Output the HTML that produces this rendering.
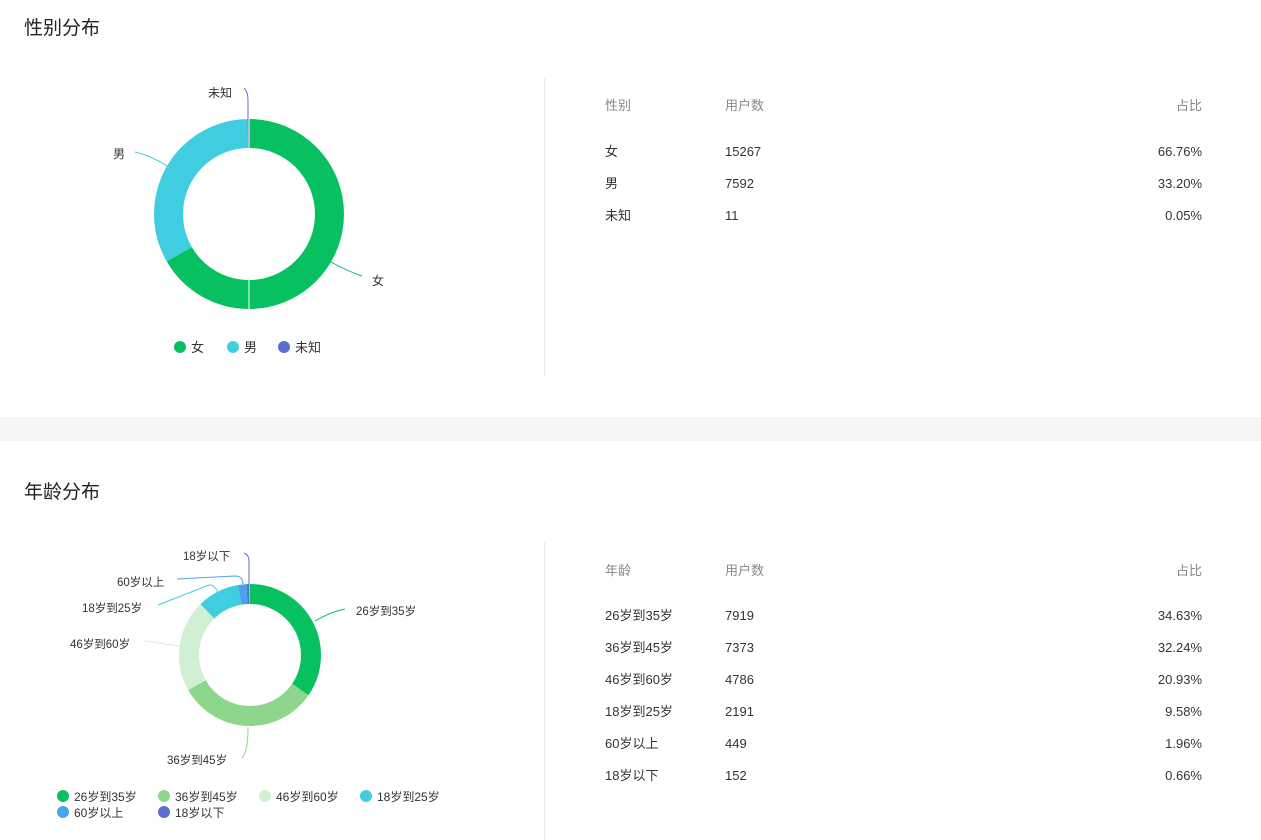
<!DOCTYPE html>
<html><head><meta charset="utf-8"><style>
body{margin:0;width:1261px;height:840px;overflow:hidden;background:#fff;font-family:"Liberation Sans","Noto Sans CJK SC",sans-serif;}
svg{display:block}
</style></head><body>
<svg width="1261" height="840" xmlns="http://www.w3.org/2000/svg" font-family="Liberation Sans, Noto Sans CJK SC, sans-serif">
<rect x="0" y="417" width="1261" height="24" fill="#f5f6f8"/>
<text x="24" y="34" font-size="19" fill="#222">性别分布</text>
<text x="24" y="498" font-size="19" fill="#222">年龄分布</text>
<line x1="544.5" y1="78" x2="544.5" y2="377" stroke="#e8e8e8"/>
<line x1="544.5" y1="542" x2="544.5" y2="840" stroke="#e8e8e8"/>

<!-- gender donut -->
<g transform="translate(249,214) rotate(-90)" fill="none" stroke-width="29">
<circle r="80.5" pathLength="100" stroke="#07c160" stroke-dasharray="66.76 100"/>
<circle r="80.5" pathLength="100" stroke="#40cde0" stroke-dasharray="33.2 100" stroke-dashoffset="-66.76"/>
<circle r="80.5" pathLength="100" stroke="#5b6fd0" stroke-dasharray="0.2 100" stroke-dashoffset="-99.9"/>
</g>
<line x1="249" y1="119" x2="249" y2="309" stroke="#fff" stroke-width="1"/>
<path d="M331,262 Q345,270 362,276" stroke="#07c160" fill="none"/>
<text x="372" y="285" font-size="12" fill="#333">女</text>
<path d="M167,166 Q152,156 135,152" stroke="#40cde0" fill="none"/>
<text x="113" y="158" font-size="12" fill="#333">男</text>
<path d="M248,119 L248,100 Q248,92 244,88" stroke="#5b6fd0" fill="none"/>
<text x="208" y="97" font-size="12" fill="#333">未知</text>
<circle cx="180" cy="347" r="6" fill="#07c160"/><text x="191" y="352" font-size="13" fill="#333">女</text>
<circle cx="233" cy="347" r="6" fill="#40cde0"/><text x="244" y="352" font-size="13" fill="#333">男</text>
<circle cx="284" cy="347" r="6" fill="#5b6fd0"/><text x="295" y="352" font-size="13" fill="#333">未知</text>

<g font-size="13" fill="#333">
<text x="605" y="110" fill="#888">性别</text><text x="725" y="110" fill="#888">用户数</text><text x="1202" y="110" fill="#888" text-anchor="end">占比</text>
<text x="605" y="156">女</text><text x="725" y="156">15267</text><text x="1202" y="156" text-anchor="end">66.76%</text>
<text x="605" y="188">男</text><text x="725" y="188">7592</text><text x="1202" y="188" text-anchor="end">33.20%</text>
<text x="605" y="220">未知</text><text x="725" y="220">11</text><text x="1202" y="220" text-anchor="end">0.05%</text>
</g>

<!-- age donut -->
<g transform="translate(250,655) rotate(-90)" fill="none" stroke-width="20">
<circle r="61" pathLength="100" stroke="#07c160" stroke-dasharray="34.63 100"/>
<circle r="61" pathLength="100" stroke="#8fd68d" stroke-dasharray="32.24 100" stroke-dashoffset="-34.63"/>
<circle r="61" pathLength="100" stroke="#d1f0d3" stroke-dasharray="20.93 100" stroke-dashoffset="-66.87"/>
<circle r="61" pathLength="100" stroke="#40cde0" stroke-dasharray="9.58 100" stroke-dashoffset="-87.8"/>
<circle r="61" pathLength="100" stroke="#4ba3ea" stroke-dasharray="1.96 100" stroke-dashoffset="-97.38"/>
<circle r="61" pathLength="100" stroke="#5b6fd0" stroke-dasharray="0.66 100" stroke-dashoffset="-99.34"/>
</g>
<g font-size="11.5" fill="#333">
<path d="M315,621 Q330,612 345,609" stroke="#07c160" fill="none"/>
<text x="356" y="615">26岁到35岁</text>
<path d="M248,727 Q248,752 242,758" stroke="#8fd68d" fill="none"/>
<text x="167" y="764">36岁到45岁</text>
<path d="M179,646 L145,641" stroke="#d1f0d3" fill="none"/>
<text x="70" y="648">46岁到60岁</text>
<path d="M218,593 Q215,585 209,585 L158,605" stroke="#40cde0" fill="none"/>
<text x="82" y="612">18岁到25岁</text>
<path d="M243,584 Q243,576 235,576 L177,579" stroke="#4ba3ea" fill="none"/>
<text x="117" y="586">60岁以上</text>
<path d="M249,584 L249,561 Q249,555 244,553" stroke="#5b6fd0" fill="none"/>
<text x="183" y="560">18岁以下</text>
</g>
<g font-size="12" fill="#333">
<circle cx="63" cy="796" r="6" fill="#07c160"/><text x="74" y="801">26岁到35岁</text>
<circle cx="164" cy="796" r="6" fill="#8fd68d"/><text x="175" y="801">36岁到45岁</text>
<circle cx="265" cy="796" r="6" fill="#d1f0d3"/><text x="276" y="801">46岁到60岁</text>
<circle cx="366" cy="796" r="6" fill="#40cde0"/><text x="377" y="801">18岁到25岁</text>
<circle cx="63" cy="812" r="6" fill="#4ba3ea"/><text x="74" y="817">60岁以上</text>
<circle cx="164" cy="812" r="6" fill="#5b6fd0"/><text x="175" y="817">18岁以下</text>
</g>

<g font-size="13" fill="#333">
<text x="605" y="575" fill="#888">年龄</text><text x="725" y="575" fill="#888">用户数</text><text x="1202" y="575" fill="#888" text-anchor="end">占比</text>
<text x="605" y="620">26岁到35岁</text><text x="725" y="620">7919</text><text x="1202" y="620" text-anchor="end">34.63%</text>
<text x="605" y="652">36岁到45岁</text><text x="725" y="652">7373</text><text x="1202" y="652" text-anchor="end">32.24%</text>
<text x="605" y="684">46岁到60岁</text><text x="725" y="684">4786</text><text x="1202" y="684" text-anchor="end">20.93%</text>
<text x="605" y="716">18岁到25岁</text><text x="725" y="716">2191</text><text x="1202" y="716" text-anchor="end">9.58%</text>
<text x="605" y="748">60岁以上</text><text x="725" y="748">449</text><text x="1202" y="748" text-anchor="end">1.96%</text>
<text x="605" y="780">18岁以下</text><text x="725" y="780">152</text><text x="1202" y="780" text-anchor="end">0.66%</text>
</g>
</svg>
</body></html>
